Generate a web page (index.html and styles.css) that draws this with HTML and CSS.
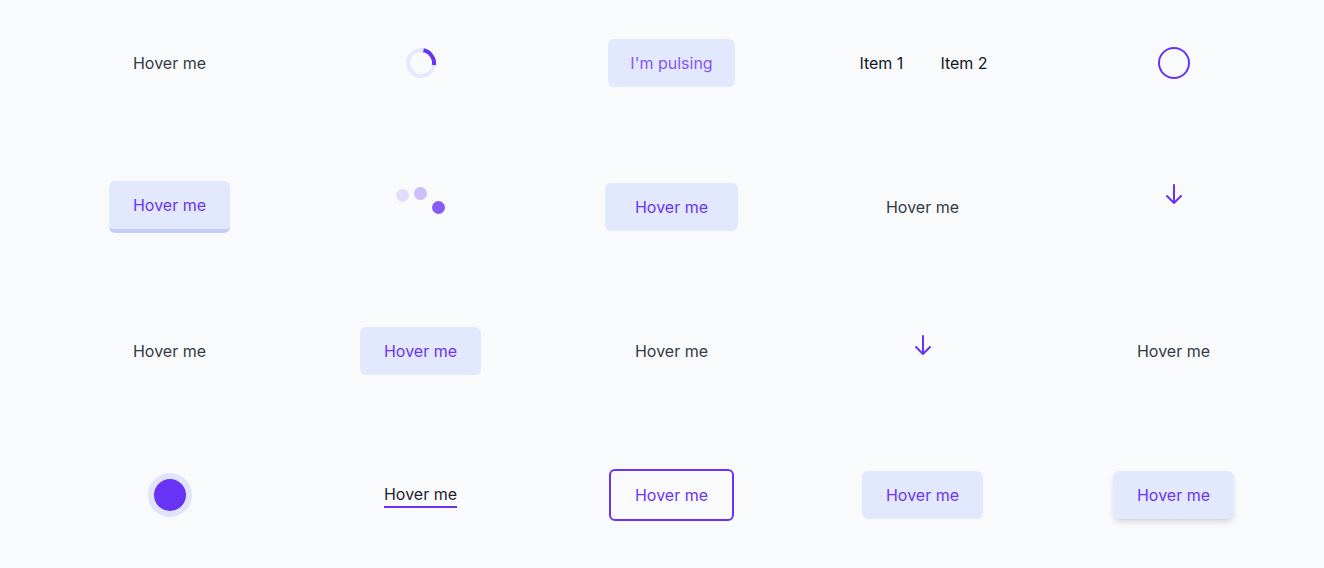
FILE: index.html
```html
<!DOCTYPE html>
<html lang="en">
<head>
    <meta charset="UTF-8">
    <meta name="viewport" content="width=device-width, initial-scale=1.0">
    <title>Hover effects</title>
    <link rel="stylesheet" href="styles.css">
</head>
<body>
    <div class="grid">
        <!-- row 1 -->
        <div class="cell"><span class="plain">Hover me</span></div>
        <div class="cell"><div class="spinner"></div></div>
        <div class="cell"><button class="btn pulsing">I'm pulsing</button></div>
        <div class="cell">
            <nav class="items">
                <span>Item 1</span>
                <span>Item 2</span>
            </nav>
        </div>
        <div class="cell"><div class="ring"></div></div>

        <!-- row 2 -->
        <div class="cell"><button class="btn btn-edge">Hover me</button></div>
        <div class="cell">
            <div class="dots">
                <span class="dot dot-1"></span>
                <span class="dot dot-2"></span>
                <span class="dot dot-3"></span>
            </div>
        </div>
        <div class="cell"><button class="btn btn-wide">Hover me</button></div>
        <div class="cell"><span class="plain">Hover me</span></div>
        <div class="cell">
            <svg class="arrow arrow-high" width="24" height="24" viewBox="0 0 24 24" fill="none" stroke="currentColor" stroke-width="2" stroke-linecap="round" stroke-linejoin="round"><path d="M19 14l-7 7m0 0l-7-7m7 7V3"/></svg>
        </div>

        <!-- row 3 -->
        <div class="cell"><span class="plain">Hover me</span></div>
        <div class="cell"><button class="btn">Hover me</button></div>
        <div class="cell"><span class="plain">Hover me</span></div>
        <div class="cell">
            <svg class="arrow arrow-low" width="24" height="24" viewBox="0 0 24 24" fill="none" stroke="currentColor" stroke-width="2" stroke-linecap="round" stroke-linejoin="round"><path d="M19 14l-7 7m0 0l-7-7m7 7V3"/></svg>
        </div>
        <div class="cell"><span class="plain">Hover me</span></div>

        <!-- row 4 -->
        <div class="cell"><div class="glow-dot"></div></div>
        <div class="cell"><span class="underline">Hover me</span></div>
        <div class="cell"><button class="btn btn-outline">Hover me</button></div>
        <div class="cell"><button class="btn">Hover me</button></div>
        <div class="cell"><button class="btn btn-shadow">Hover me</button></div>
    </div>
</body>
</html>
```

FILE: styles.css
```css
body {
    margin: 0;
    font-family: Inter, "Noto Sans", sans-serif;
    font-size: 16px;
    line-height: 24px;
    background-color: #f8fafc;
    color: #374151;
}

.grid {
    display: grid;
    grid-template-columns: repeat(5, 251px);
    grid-auto-rows: 96px;
    row-gap: 48px;
    padding: 15px 0 0 44px;
}

.cell {
    display: flex;
    justify-content: center;
    align-items: center;
}

.plain {
    color: #343a46;
}

/* buttons */
.btn {
    font-family: inherit;
    font-size: 16px;
    line-height: 24px;
    background-color: #e2e9fe;
    color: #6d35f0;
    padding: 12px 24px;
    border: none;
    border-radius: 6px;
    cursor: pointer;
}

.pulsing {
    padding: 12px 22px;
    color: #8756f2;
}

.btn-edge {
    border-bottom: 4px solid #bfcefd;
}

.btn-wide {
    padding: 12px 30px;
}

.btn-outline {
    background-color: transparent;
    border: 2px solid #6a33f2;
}

.btn-shadow {
    box-shadow: 0 4px 6px -1px rgba(0, 0, 0, 0.12), 0 2px 4px -2px rgba(0, 0, 0, 0.08);
}

/* spinner */
.spinner {
    box-sizing: border-box;
    width: 30px;
    height: 30px;
    border: 4px solid #e4e9fe;
    border-top-color: #6a33f2;
    border-radius: 50%;
    transform: rotate(55deg);
}

/* nav */
.items {
    display: flex;
    gap: 37px;
    margin-left: 2px;
    color: #111827;
}

/* ring */
.ring {
    box-sizing: border-box;
    width: 32px;
    height: 32px;
    border: 2px solid #6a33f2;
    border-radius: 50%;
}

/* dots */
.dots {
    display: flex;
    gap: 5px;
}

.dot {
    width: 13px;
    height: 13px;
    border-radius: 50%;
    background-color: #6a33f2;
}

.dot-1 {
    opacity: 0.15;
    transform: translateY(-12px);
}

.dot-2 {
    opacity: 0.3;
    transform: translateY(-14px);
}

.dot-3 {
    opacity: 0.8;
}

/* arrows */
.arrow {
    color: #6a33f2;
}

.arrow-high {
    transform: translateY(-13px);
}

.arrow-low {
    transform: translateY(-6px);
}

/* glow dot */
.glow-dot {
    width: 32px;
    height: 32px;
    border-radius: 50%;
    background-color: #6933f5;
    box-shadow: 0 0 0 6px #e0e4fb;
}

/* underline link */
.underline {
    display: inline-block;
    line-height: 23px;
    padding-top: 1px;
    color: #1f2430;
    border-bottom: 2px solid #6a33f2;
}
```
